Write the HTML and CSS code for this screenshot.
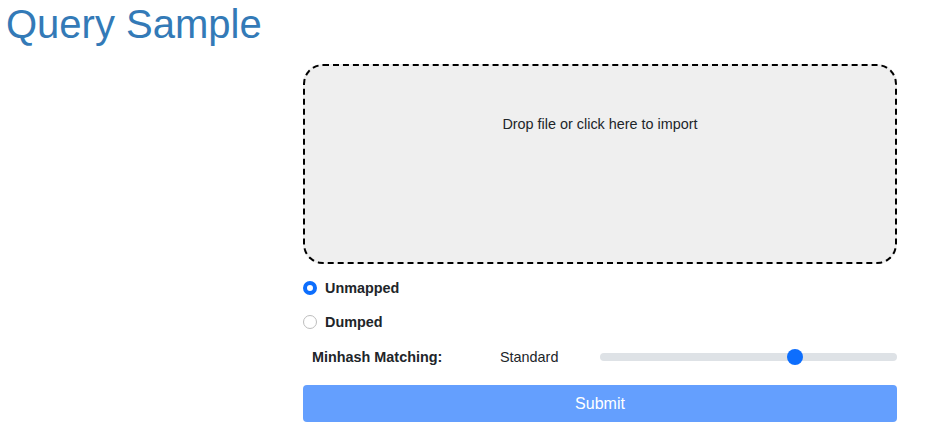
FILE: index.html
```html
<!DOCTYPE html>
<html>
<head>
<meta charset="utf-8">
<link rel="stylesheet" href="styles.css">
</head>
<body>
<h1 class="title">Query Sample</h1>
<form class="form">
  <div class="dropzone">Drop file or click here to import</div>
  <div class="radio-row first">
    <span class="radio checked"></span>
    <span class="radio-label">Unmapped</span>
  </div>
  <div class="radio-row">
    <span class="radio"></span>
    <span class="radio-label">Dumped</span>
  </div>
  <div class="minhash-row">
    <span class="minhash-label">Minhash Matching:</span>
    <span class="minhash-value">Standard</span>
    <div class="range">
      <div class="track"></div>
      <div class="thumb" style="left: 65.6%"></div>
    </div>
  </div>
  <button type="button" class="submit">Submit</button>
</form>
</body>
</html>
```
FILE: styles.css
```css
html, body {
  margin: 0;
  padding: 0;
  background: #fff;
  font-family: "Liberation Sans", Arial, sans-serif;
  color: #212529;
}
.title {
  margin: 2px 0 0 6px;
  font-size: 40px;
  line-height: 44px;
  font-weight: 400;
  color: #337ab7;
}
.form {
  margin: 18px 0 0 303px;
  width: 594px;
  display: flex;
  flex-direction: column;
}
.dropzone {
  box-sizing: border-box;
  height: 200px;
  border: 2px dashed #000;
  border-radius: 20px;
  background: #efefef;
  font-size: 14.4px;
  text-align: center;
  padding-top: 49px;
  line-height: 18px;
}
.radio-row {
  display: flex;
  align-items: center;
  height: 34px;
  gap: 8px;
}
.radio-row.first {
  margin-top: 7px;
}
.radio {
  box-sizing: border-box;
  width: 14px;
  height: 14px;
  border-radius: 50%;
  border: 1px solid #bdbdbd;
  background: #fff;
}
.radio.checked {
  border: 4px solid #0d6efd;
  background: #fff;
}
.radio-label {
  font-size: 14.4px;
  font-weight: 700;
}
.minhash-row {
  display: grid;
  grid-template-columns: 197px 100px 1fr;
  align-items: center;
  height: 36px;
  font-size: 14.4px;
}
.minhash-label {
  font-weight: 700;
  padding-left: 9px;
}
.range {
  position: relative;
  height: 16px;
  display: flex;
  align-items: center;
}
.track {
  width: 100%;
  height: 8px;
  border-radius: 4px;
  background: #dee2e6;
}
.thumb {
  position: absolute;
  top: 0;
  width: 16px;
  height: 16px;
  border-radius: 50%;
  background: #0d6efd;
  margin-left: -8px;
}
.submit {
  margin-top: 10px;
  height: 37px;
  border: none;
  border-radius: 4px;
  background: #649ffe;
  color: #fff;
  font-family: "Liberation Sans", Arial, sans-serif;
  font-size: 16px;
}
```
